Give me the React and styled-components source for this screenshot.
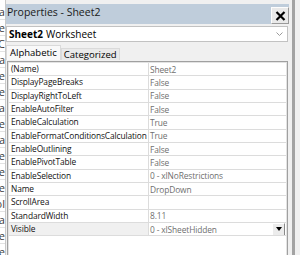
import React from "react";
import styled, { createGlobalStyle } from "styled-components";

const Global = createGlobalStyle`
  html, body {
    margin: 0;
    padding: 0;
    background: #f0f0f0;
    overflow: hidden;
  }
  * { box-sizing: border-box; }
`;

const Screen = styled.div`
  width: 300px;
  height: 255px;
  display: flex;
  font-family: "Open Sans", "Noto Sans", sans-serif;
  color: #000;
  background: #f0f0f0;
  overflow: hidden;
`;

const SheetStrip = styled.div`
  width: 6px;
  flex: none;
  background: #fff;
  border-right: 1px solid #c8c8c8;
  display: flex;
  flex-direction: column;
  padding-top: 4px;
  overflow: hidden;
`;

const SheetCell = styled.div`
  height: 16px;
  flex: none;
  display: flex;
  justify-content: flex-end;
  align-items: center;
  font-size: 11px;
  color: #3a3a3a;
  border-bottom: 1px solid #e2e2e2;
  white-space: nowrap;
  overflow: hidden;
`;

const Panel = styled.div`
  width: 283px;
  flex: none;
  display: flex;
  flex-direction: column;
  padding-top: 4px;
`;

const Gap = styled.div`
  width: 3px;
  flex: none;
`;

const Frame = styled.div`
  width: 3px;
  flex: none;
  background: #a3a3a3;
`;

const TitleBar = styled.div`
  height: 20px;
  background: #bfcddb;
  display: flex;
  align-items: flex-start;
  justify-content: space-between;
  padding-left: 1px;
`;

const Title = styled.span`
  font-size: 10.5px;
  line-height: 17px;
  color: #1a1a1a;
`;

const CloseButton = styled.div`
  width: 18px;
  height: 17px;
  margin-top: 3px;
  background: #e9e9e9;
  border: 1px solid #fdfdfd;
  border-right-color: #9a9a9a;
  border-bottom-color: #9a9a9a;
  display: flex;
  align-items: center;
  justify-content: center;
`;

const ObjectSelect = styled.div`
  height: 16px;
  margin-top: 2px;
  margin-right: 1px;
  background: #fff;
  border: 1px solid #c2c2c2;
  display: flex;
  align-items: center;
  justify-content: space-between;
  padding: 0 4px 0 2px;
  font-size: 10px;
  white-space: nowrap;
`;

const Strong = styled.b`
  font-weight: 700;
  margin-right: 3px;
`;

const Tabs = styled.div`
  display: flex;
  align-items: flex-end;
  height: 15px;
  margin-top: 3px;
`;

const Tab = styled.div`
  height: ${(p) => (p.$active ? "15px" : "12px")};
  padding: 0 ${(p) => (p.$active ? "3px" : "2px")};
  background: ${(p) => (p.$active ? "#f9f9f9" : "#e9e9e9")};
  border: 1px solid #dadada;
  border-bottom: none;
  font-size: 9.5px;
  line-height: ${(p) => (p.$active ? "14px" : "11px")};
  white-space: nowrap;
`;

const Grid = styled.div`
  flex: 1;
  margin: 1px 1px 0 1px;
  background: #fff;
  border: 1px solid #a0a0a0;
  border-bottom: none;
  box-shadow: inset 1px 1px 0 #e3e3e3, inset -1px 0 0 #e3e3e3;
  padding: 1px 1px 0 1px;
`;

const Row = styled.div`
  display: flex;
  height: 13.33px;
  border-bottom: 1px solid #dcdcdc;
  font-size: 8.4px;
  letter-spacing: -0.12px;
  white-space: nowrap;
`;

const NameCell = styled.div`
  width: 140px;
  flex: none;
  padding-left: 2px;
  border-right: 1px solid #dcdcdc;
  background: ${(p) => (p.$selected ? "#f0f0f0" : "#fff")};
  overflow: hidden;
  line-height: 12.3px;
  color: #111;
`;

const ValueCell = styled.div`
  flex: 1;
  min-width: 0;
  padding-left: 1px;
  display: flex;
  align-items: center;
  justify-content: space-between;
  color: #6f6f6f;
  overflow: hidden;
`;

const DropButton = styled.div`
  width: 13px;
  height: 13px;
  flex: none;
  margin-right: 1px;
  background: #ececec;
  border: 1px solid #fff;
  border-right-color: #8a8a8a;
  border-bottom-color: #8a8a8a;
  display: flex;
  align-items: center;
  justify-content: center;
`;

const sheetCells = ["Data", "Name", "ABC", "Area", "Line", "Type", "Data", "Name", "Area", "Line", "Type", "Code", "Col", "Data", "Line", "Name"];

const properties = [
  ["(Name)", "Sheet2"],
  ["DisplayPageBreaks", "False"],
  ["DisplayRightToLeft", "False"],
  ["EnableAutoFilter", "False"],
  ["EnableCalculation", "True"],
  ["EnableFormatConditionsCalculation", "True"],
  ["EnableOutlining", "False"],
  ["EnablePivotTable", "False"],
  ["EnableSelection", "0 - xlNoRestrictions"],
  ["Name", "DropDown"],
  ["ScrollArea", ""],
  ["StandardWidth", "8.11"],
  ["Visible", "0 - xlSheetHidden", true],
];

export default function App() {
  return (
    <Screen>
      <Global />
      <SheetStrip>
        {sheetCells.map((t, i) => (
          <SheetCell key={i}>{t}</SheetCell>
        ))}
      </SheetStrip>
      <Panel>
        <TitleBar>
          <Title>Properties - Sheet2</Title>
          <CloseButton>
            <svg width="11" height="10" viewBox="0 0 11 10">
              <path d="M1.5 1 L9.5 9 M9.5 1 L1.5 9" stroke="#000" strokeWidth="2.2" />
            </svg>
          </CloseButton>
        </TitleBar>
        <ObjectSelect>
          <span>
            <Strong>Sheet2</Strong>Worksheet
          </span>
          <svg width="7" height="4" viewBox="0 0 7 4">
            <path d="M0.5 0.5 L3.5 3.5 L6.5 0.5" stroke="#9a9a9a" fill="none" strokeWidth="1" />
          </svg>
        </ObjectSelect>
        <Tabs>
          <Tab $active>Alphabetic</Tab>
          <Tab>Categorized</Tab>
        </Tabs>
        <Grid>
          {properties.map(([name, value, selected]) => (
            <Row key={name}>
              <NameCell $selected={selected}>{name}</NameCell>
              <ValueCell>
                <span>{value}</span>
                {selected && (
                  <DropButton>
                    <svg width="6" height="4" viewBox="0 0 6 4">
                      <path d="M0 0 H6 L3 4 Z" fill="#000" />
                    </svg>
                  </DropButton>
                )}
              </ValueCell>
            </Row>
          ))}
        </Grid>
      </Panel>
      <Gap />
      <Frame />
    </Screen>
  );
}
